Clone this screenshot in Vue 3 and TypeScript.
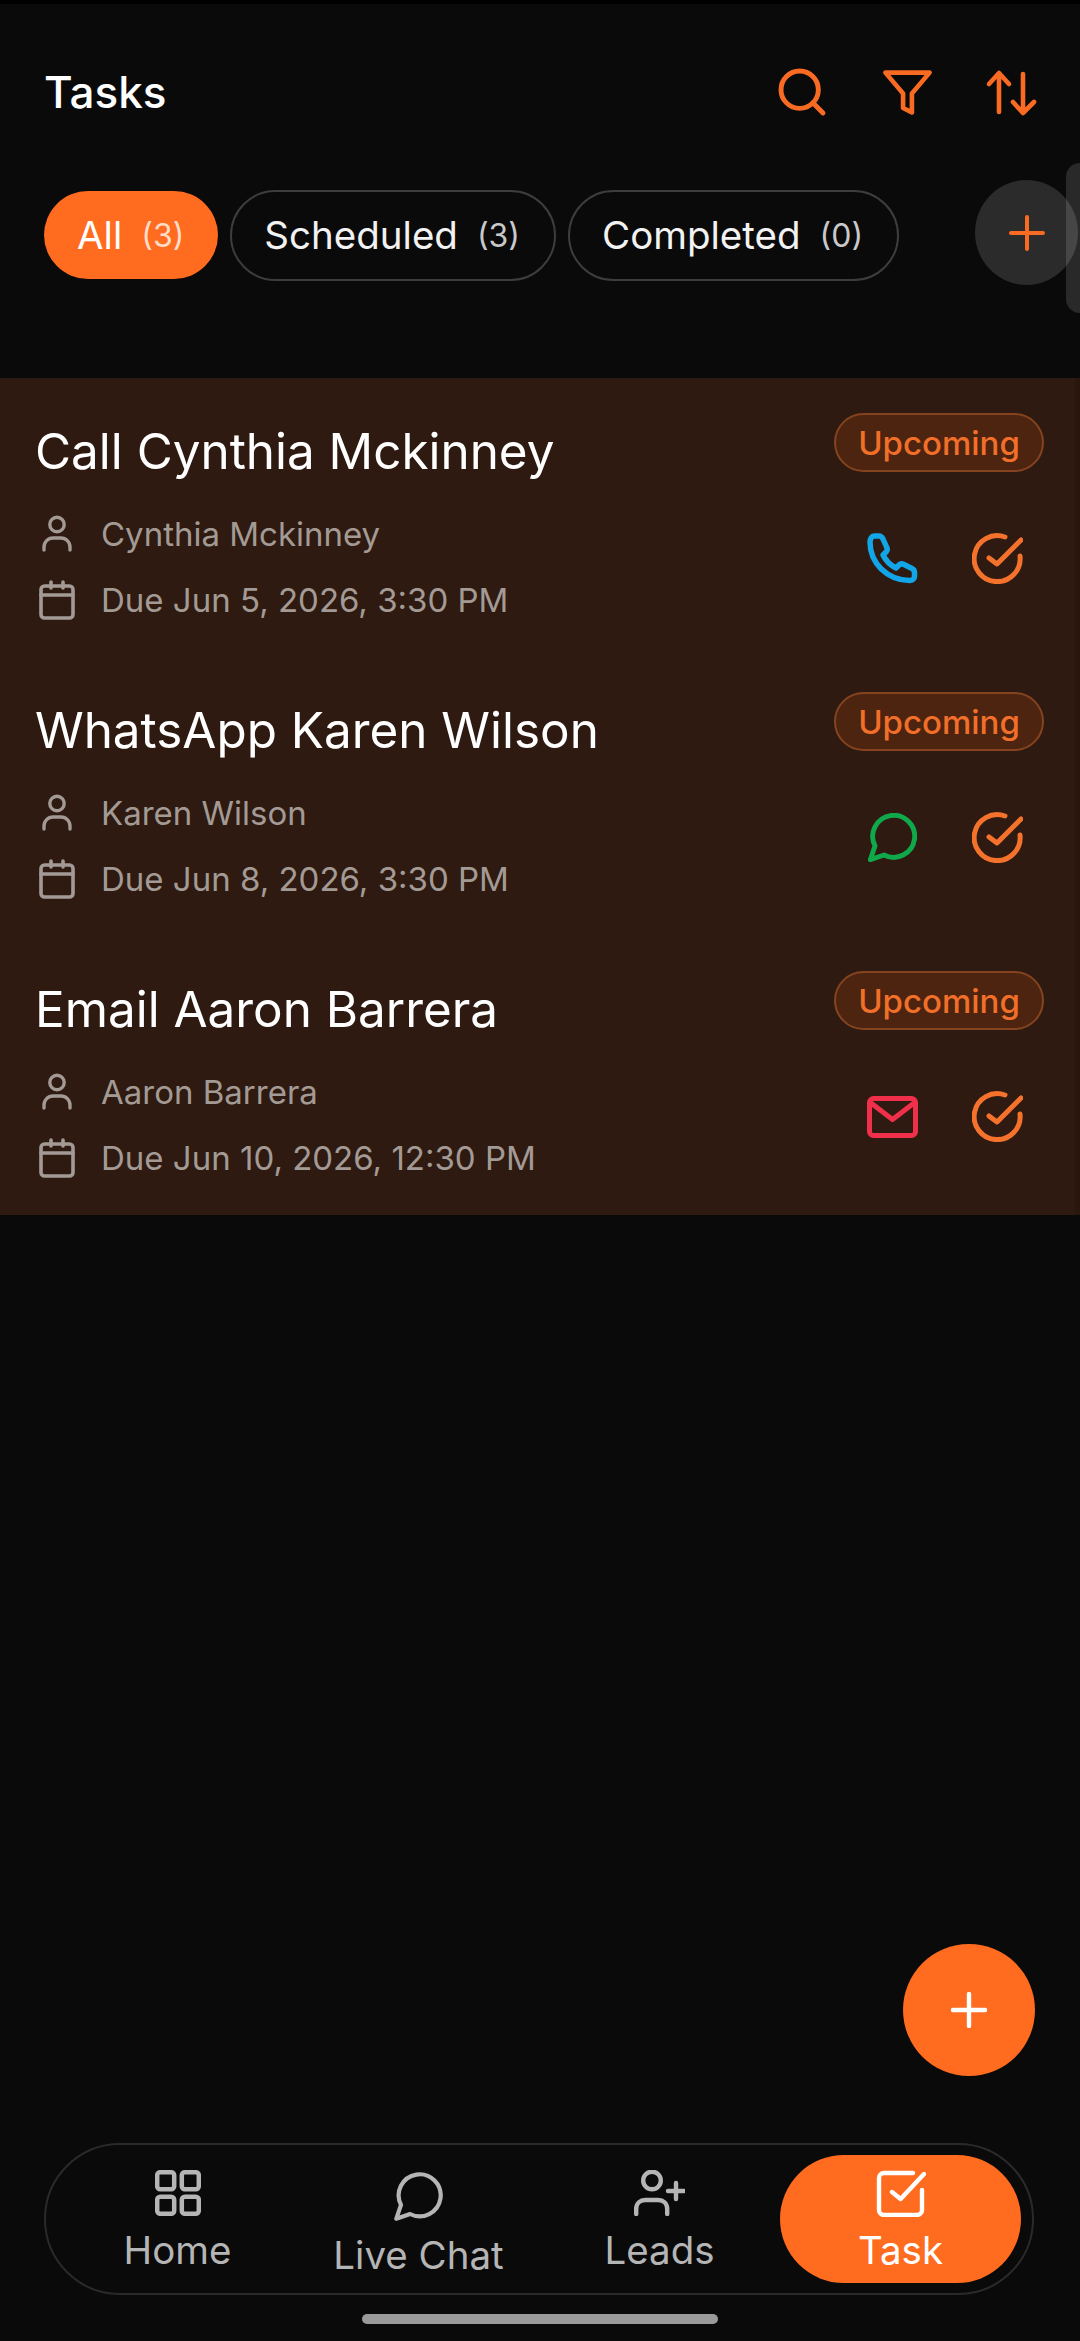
<template>
  <div class="page">
    <header class="top">
      <h1 class="heading">Tasks</h1>
      <div class="top-actions">
        <button class="top-btn">
          <svg width="56" height="56" viewBox="0 0 24 24" fill="none" stroke="#f96a22" stroke-width="2.1" stroke-linecap="round" stroke-linejoin="round">
            <circle cx="11" cy="11" r="8" />
            <path d="M21 21l-4.35-4.35" />
          </svg>
        </button>
        <button class="top-btn">
          <svg width="53" height="53" viewBox="0 0 24 24" fill="none" stroke="#f96a22" stroke-width="2.1" stroke-linecap="round" stroke-linejoin="round">
            <path d="M22 3H2l8 9.46V19l4 2v-8.54L22 3z" />
          </svg>
        </button>
        <button class="top-btn">
          <svg width="56" height="56" viewBox="0 0 56 56" fill="none" stroke="#f96a22" stroke-width="4.6" stroke-linecap="round" stroke-linejoin="round">
            <path d="M15 48V10M5 20L15 9l10 11" />
            <path d="M39 10v38M29 38l10 11 11-11" />
          </svg>
        </button>
      </div>
    </header>

    <div class="filters">
      <div v-for="f in filters" :key="f.label" class="chip" :class="{ active: f.active }">
        <span class="chip-label">{{ f.label }}</span>
        <span class="chip-count">({{ f.count }})</span>
      </div>
      <button class="add-filter">
        <svg width="36" height="36" viewBox="0 0 36 36" fill="none" stroke="#f96a22" stroke-width="4" stroke-linecap="round">
          <path d="M18 2v32M2 18h32" />
        </svg>
      </button>
    </div>
    <div class="scroll-handle"></div>

    <section class="list">
      <article v-for="t in tasks" :key="t.title" class="task">
        <div class="task-main">
          <div class="task-title">{{ t.title }}</div>
          <div class="meta first">
            <svg class="meta-icon" width="42" height="42" viewBox="0 0 42 42" fill="none" stroke="#a39a95" stroke-width="3.4" stroke-linecap="round">
              <circle cx="21" cy="11.5" r="7.2" />
              <path d="M8 37v-3a9 9 0 0 1 9-9h8a9 9 0 0 1 9 9v3" />
            </svg>
            <span>{{ t.person }}</span>
          </div>
          <div class="meta">
            <svg class="meta-icon" width="42" height="42" viewBox="0 0 42 42" fill="none" stroke="#a39a95" stroke-width="3.6" stroke-linecap="round" stroke-linejoin="round">
              <rect x="5" y="7" width="32" height="32" rx="3.5" />
              <path d="M5 16h32M15 3v6M27 3v6" />
            </svg>
            <span>{{ t.due }}</span>
          </div>
        </div>
        <div class="task-side">
          <div class="badge">Upcoming</div>
          <div class="task-actions">
            <span class="action">
              <svg v-if="t.kind === 'call'" width="51" height="51" viewBox="0 0 51 51" fill="none" stroke="#12a5e8" stroke-width="5.5" stroke-linejoin="round">
                <path d="M7 3h5c2 0 3 1 4 3l4 9c.7 2 0 3-1 4l-3 3c3 6 7 10 13 13l3-3c1.500-1.500 3-1.500 5-.5l8 4c2 1 2.500 2.500 2.500 4v4c0 2.500-2 4-5 4C20 47 3 30 3 9c0-3 2-6 4-6z" />
              </svg>
              <svg v-else-if="t.kind === 'chat'" width="49" height="49" viewBox="1 2 21 21" fill="none" stroke="#0fa84a" stroke-width="2.100" stroke-linejoin="round">
                <path d="M7.900 20A9 9 0 1 0 4 16.100L2 22Z" />
              </svg>
              <svg v-else width="51" height="42" viewBox="0 0 51 42" fill="none" stroke="#f0304a" stroke-width="5" stroke-linecap="round" stroke-linejoin="round">
                <rect x="2.500" y="2.500" width="46" height="37" rx="4" />
                <path d="M4 7l21.500 16.500L47 7" />
              </svg>
            </span>
            <span class="action">
              <svg width="51" height="51" viewBox="0 0 51 51" fill="none" stroke="#f4722b" stroke-width="5" stroke-linecap="round" stroke-linejoin="round">
                <path d="M33 4A23 23 0 1 0 48 23" />
                <path d="M17 25l8 6L49 7" />
              </svg>
            </span>
          </div>
        </div>
      </article>
    </section>

    <button class="fab">
      <svg width="36" height="36" viewBox="0 0 36 36" fill="none" stroke="#fff" stroke-width="4.400" stroke-linecap="round">
        <path d="M18 2v32M2 18h32" />
      </svg>
    </button>

    <nav class="tabs">
      <div class="tab">
        <svg width="46" height="46" viewBox="0 0 46 46" fill="none" stroke="#b5b5b5" stroke-width="4.500">
          <rect x="2.200" y="2.200" width="17" height="17" rx="3" />
          <rect x="26.800" y="2.200" width="17" height="17" rx="3" />
          <rect x="2.200" y="26.800" width="17" height="17" rx="3" />
          <rect x="26.800" y="26.800" width="17" height="17" rx="3" />
        </svg>
        <span>Home</span>
      </div>
      <div class="tab lower">
        <svg width="49" height="49" viewBox="1 2 21 21" fill="none" stroke="#b5b5b5" stroke-width="1.800" stroke-linejoin="round">
          <path d="M7.900 20A9 9 0 1 0 4 16.100L2 22Z" />
        </svg>
        <span>Live Chat</span>
      </div>
      <div class="tab">
        <svg width="51" height="46" viewBox="0 0 51 46" fill="none" stroke="#b5b5b5" stroke-width="4.400" stroke-linecap="round">
          <circle cx="18" cy="10.500" r="8.800" />
          <path d="M2.200 44v-5c0-6 4-9 9-9h13c5 0 9 3 9 9v5" />
          <path d="M42 13v16M34 21h16" />
        </svg>
        <span>Leads</span>
      </div>
      <div class="tab current">
        <svg width="50" height="47" viewBox="0 0 50 47" fill="none" stroke="#fff" stroke-width="4.400" stroke-linecap="round" stroke-linejoin="round">
          <path d="M37 3H8a5 5 0 0 0-5 5v32a5 5 0 0 0 5 5h33a5 5 0 0 0 5-5V20" />
          <path d="M16 22l8.600 7L48 4" />
        </svg>
        <span>Task</span>
      </div>
    </nav>
    <div class="home-bar"></div>
  </div>
</template>

<script setup lang="ts">
type Kind = 'call' | 'chat' | 'mail'

const filters = [
  { label: 'All', count: 3, active: true },
  { label: 'Scheduled', count: 3, active: false },
  { label: 'Completed', count: 0, active: false },
]

const tasks: { title: string; person: string; due: string; kind: Kind }[] = [
  { title: 'Call Cynthia Mckinney', person: 'Cynthia Mckinney', due: 'Due Jun 5, 2026, 3:30 PM', kind: 'call' },
  { title: 'WhatsApp Karen Wilson', person: 'Karen Wilson', due: 'Due Jun 8, 2026, 3:30 PM', kind: 'chat' },
  { title: 'Email Aaron Barrera', person: 'Aaron Barrera', due: 'Due Jun 10, 2026, 12:30 PM', kind: 'mail' },
]
</script>

<style>
html,
body {
  margin: 0;
  background: #0a0a0a;
}
</style>

<style scoped>
.page {
  position: relative;
  display: flex;
  flex-direction: column;
  width: 1080px;
  height: 2341px;
  overflow: hidden;
  box-sizing: border-box;
  border-top: 4px solid #000;
  background: #0a0a0a;
  color: #fff;
  font-family: Inter, "Noto Sans", sans-serif;
}
button {
  display: flex;
  align-items: center;
  justify-content: center;
  padding: 0;
  border: none;
  background: none;
}
.top {
  display: flex;
  align-items: center;
  justify-content: space-between;
  height: 176px;
  padding: 0 40px 0 44px;
  flex-shrink: 0;
}
.heading {
  margin: 0;
  font-size: 44px;
  font-weight: 500;
}
.top-actions {
  display: flex;
  gap: 49px;
}
.top-btn {
  width: 56px;
  height: 56px;
}
.filters {
  display: flex;
  align-items: center;
  gap: 12px;
  height: 105px;
  padding: 0 2px 0 44px;
  flex-shrink: 0;
}
.chip {
  display: flex;
  align-items: center;
  gap: 19px;
  height: 91px;
  margin-top: 5px;
  padding: 0 34px 0 32px;
  box-sizing: border-box;
  border: 2px solid #3d3d3d;
  border-radius: 46px;
  font-size: 38.5px;
  color: #f2f2f2;
}
.chip.active {
  height: 88px;
  padding: 0 34px 0 33px;
  border: none;
  background: #ff6b1f;
  color: #fff;
}
.chip-count {
  font-size: 32px;
  color: #c9c9c9;
}
.chip.active .chip-count {
  color: #ffdcc8;
}
.add-filter {
  width: 103px;
  height: 105px;
  margin-left: auto;
  border-radius: 50%;
  background: #2b2b2b;
}
.scroll-handle {
  position: absolute;
  top: 159px;
  right: 0;
  width: 14px;
  height: 150px;
  border-radius: 14px 0 0 14px;
  background: rgba(255, 255, 255, 0.13);
}
.list {
  position: relative;
  margin-top: 93px;
  background: #2e1a10;
  flex-shrink: 0;
}
.list::after {
  content: '';
  position: absolute;
  top: 0;
  right: 0;
  bottom: 0;
  width: 5px;
  background: rgba(0, 0, 0, 0.1);
}
.task {
  display: flex;
  justify-content: space-between;
  height: 279px;
  padding: 35px 36px 0;
  box-sizing: border-box;
}
.task-title {
  margin-left: -1px;
  font-size: 49.4px;
  line-height: 76px;
  color: #fff;
}
.meta {
  display: flex;
  align-items: center;
  gap: 23px;
  height: 42px;
  margin-top: 24px;
  font-size: 33px;
  color: #a39a95;
}
.meta.first {
  margin-top: 24px;
}
.task-side {
  display: flex;
  flex-direction: column;
  align-items: flex-end;
}
.badge {
  display: flex;
  align-items: center;
  justify-content: center;
  width: 210px;
  height: 59px;
  box-sizing: border-box;
  border: 2px solid #85431f;
  border-radius: 30px;
  background: #4c2410;
  font-size: 33px;
  font-weight: 500;
  color: #f26f2a;
}
.task-actions {
  display: flex;
  gap: 54px;
  margin-top: 61px;
  padding-right: 21px;
}
.action {
  display: flex;
  align-items: center;
  justify-content: center;
  width: 51px;
  height: 51px;
}
.fab {
  position: absolute;
  top: 1940px;
  left: 903px;
  width: 132px;
  height: 132px;
  border-radius: 50%;
  background: #ff6b1f;
}
.tabs {
  display: grid;
  grid-template-columns: repeat(4, 241px);
  margin: auto 46px 19px 44px;
  padding: 10px 11px;
  height: 152px;
  box-sizing: border-box;
  border: 2px solid #2a2a2a;
  border-radius: 76px;
}
.tab {
  display: flex;
  flex-direction: column;
  align-items: center;
  padding-top: 15px;
  border-radius: 64px;
  font-size: 38.5px;
  line-height: 44px;
  color: #b5b5b5;
}
.tab svg {
  margin-bottom: 12px;
}
.tab.lower {
  padding-top: 17px;
}
.tab.current {
  background: #ff6b1f;
  color: #fff;
}
.tab.current svg {
  margin-bottom: 11px;
}
.home-bar {
  align-self: center;
  width: 356px;
  height: 10px;
  margin-bottom: 17px;
  border-radius: 5px;
  background: #9a9a9a;
  flex-shrink: 0;
}
</style>
